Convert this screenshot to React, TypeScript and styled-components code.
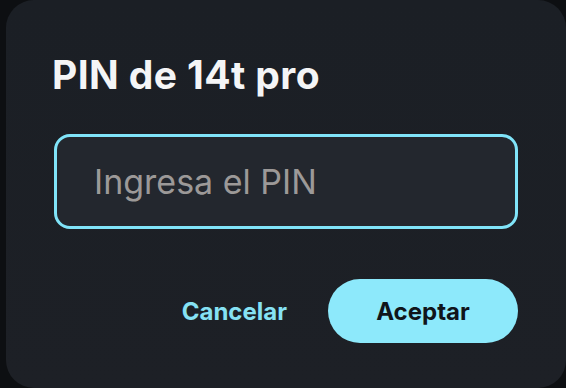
import styled, { createGlobalStyle } from "styled-components";

const GlobalStyle = createGlobalStyle`
  html, body {
    margin: 0;
    padding: 0;
    background: #0d0f12;
    font-family: Inter, "Noto Sans", sans-serif;
  }
`;

const Screen = styled.div`
  width: 566px;
  height: 388px;
  overflow: hidden;
  display: flex;
  background: #0d0f12;
`;

const Dialog = styled.div`
  margin-left: 6px;
  width: 560px;
  height: 388px;
  box-sizing: border-box;
  padding: 51px 48px 0 46px;
  border-radius: 28px;
  background: linear-gradient(180deg, #1b1f25 0%, #1d2026 100%);
  display: flex;
  flex-direction: column;
`;

const Title = styled.h1`
  margin: 0;
  font-size: 39px;
  font-weight: 700;
  line-height: 47px;
  letter-spacing: 0.4px;
  color: #f4f5f6;
`;

const PinInput = styled.input`
  margin: 36px 0 0 2px;
  width: calc(100% - 2px);
  height: 95px;
  box-sizing: border-box;
  border: 3px solid #80e4f9;
  border-radius: 16px;
  background: #23272e;
  padding: 0 0 0 37px;
  font-family: Inter, "Noto Sans", sans-serif;
  font-size: 34px;
  color: #e6e6e6;
  outline: none;

  &::placeholder {
    color: #9c9998;
  }
`;

const Actions = styled.div`
  margin-top: 50px;
  display: flex;
  justify-content: flex-end;
  align-items: center;
  gap: 41px;
`;

const TextButton = styled.button`
  border: none;
  background: none;
  padding: 0;
  font-family: Inter, "Noto Sans", sans-serif;
  font-size: 24px;
  font-weight: 700;
  color: #86e2f4;
  cursor: pointer;
`;

const PillButton = styled.button`
  width: 190px;
  height: 64px;
  border: none;
  border-radius: 32px;
  background: #8de9fb;
  font-family: Inter, "Noto Sans", sans-serif;
  font-size: 24px;
  font-weight: 700;
  color: #10151a;
  cursor: pointer;
`;

export default function App() {
  return (
    <>
      <GlobalStyle />
      <Screen>
        <Dialog>
          <Title>PIN de 14t pro</Title>
          <PinInput placeholder="Ingresa el PIN" />
          <Actions>
            <TextButton>Cancelar</TextButton>
            <PillButton>Aceptar</PillButton>
          </Actions>
        </Dialog>
      </Screen>
    </>
  );
}
